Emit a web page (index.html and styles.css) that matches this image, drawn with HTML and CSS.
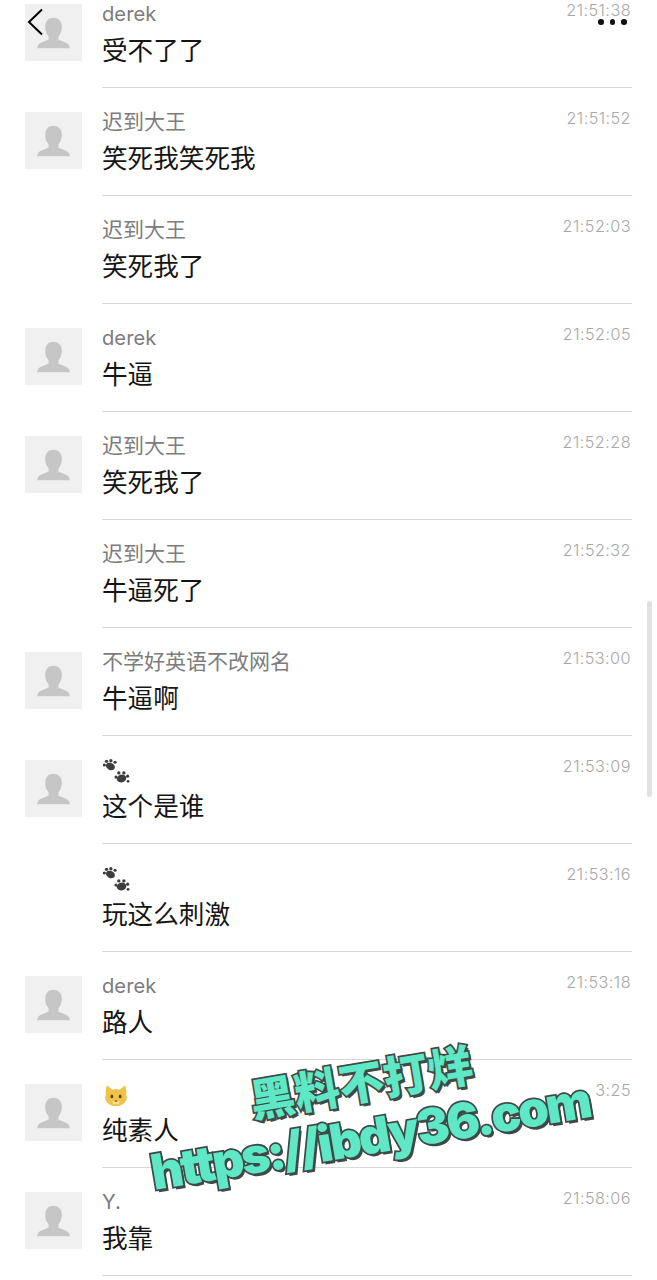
FILE: index.html
```html
<!DOCTYPE html>
<html lang="zh">
<head>
<meta charset="utf-8">
<title>聊天记录</title>
<link rel="stylesheet" href="styles.css">
</head>
<body>
<svg class="defs" width="0" height="0" aria-hidden="true">
  <defs>
    <symbol id="person" viewBox="0 0 58 58">
      <rect width="58" height="58" fill="#f0f0f0"/>
      <path d="M29 14c-5.500 0-8.500 4-8.500 9.500 0 4 1.500 7.500 3.500 9.500v3c-3 2-9 2.700-10.500 5.500-.8 1.300-1 2.300-1 3.500h33c0-1.200-.2-2.200-1-3.500-1.500-2.800-7.500-3.500-10.500-5.500v-3c2-2 3.500-5.500 3.500-9.500 0-5.500-3-9.500-8.500-9.500z" fill="#c6c6c6"/>
    </symbol>
    <symbol id="paws" viewBox="0 0 30 28">
      <g fill="#3d3d3d">
        <ellipse cx="9" cy="8" rx="5" ry="3.800" transform="rotate(25 9 8)"/>
        <circle cx="2.500" cy="6.500" r="1.700"/><circle cx="4.800" cy="2.500" r="1.800"/><circle cx="9.500" cy="1.900" r="1.800"/><circle cx="14" cy="3.500" r="1.700"/>
        <ellipse cx="21" cy="21" rx="5.200" ry="4.200" transform="rotate(-15 21 21)"/>
        <circle cx="15" cy="19.500" r="1.700"/><circle cx="18" cy="15" r="1.800"/><circle cx="23.500" cy="15" r="1.800"/><circle cx="27.500" cy="18.500" r="1.700"/><circle cx="28" cy="24" r="1.500"/>
      </g>
    </symbol>
    <symbol id="cat" viewBox="0 0 26 24">
      <path d="M3 1l6 4.500c2.500-.8 5.500-.8 8 0L23 1c1 3 1.500 7 1 10 1 3 1 5.500-1 8-2.500 3.500-6 4.500-10 4.500S5.500 22.500 3 19c-2-2.500-2-5-1-8-.5-3 0-7 1-10z" fill="#efc44a"/>
      <path d="M8 17c1.500 3 8.500 3 10 0l-2 4h-6z" fill="#fbe6a0"/>
      <ellipse cx="8.500" cy="13" rx="1.500" ry="2" fill="#5f4210"/>
      <ellipse cx="17.500" cy="13" rx="1.500" ry="2" fill="#5f4210"/>
      <path d="M11.500 17.500h3l-1.500 1.500z" fill="#5f4210"/>
    </symbol>
  </defs>
</svg>

<main class="list">
  <article class="row">
    <svg class="avatar"><use href="#person"/></svg>
    <div class="body"><div class="head"><span class="name latin">derek</span><time class="time">21:51:38</time></div><p class="msg">受不了了</p></div>
  </article>
  <article class="row">
    <svg class="avatar"><use href="#person"/></svg>
    <div class="body"><div class="head"><span class="name">迟到大王</span><time class="time">21:51:52</time></div><p class="msg">笑死我笑死我</p></div>
  </article>
  <article class="row">
    <div class="avatar"></div>
    <div class="body"><div class="head"><span class="name">迟到大王</span><time class="time">21:52:03</time></div><p class="msg">笑死我了</p></div>
  </article>
  <article class="row">
    <svg class="avatar"><use href="#person"/></svg>
    <div class="body"><div class="head"><span class="name latin">derek</span><time class="time">21:52:05</time></div><p class="msg">牛逼</p></div>
  </article>
  <article class="row">
    <svg class="avatar"><use href="#person"/></svg>
    <div class="body"><div class="head"><span class="name">迟到大王</span><time class="time">21:52:28</time></div><p class="msg">笑死我了</p></div>
  </article>
  <article class="row">
    <div class="avatar"></div>
    <div class="body"><div class="head"><span class="name">迟到大王</span><time class="time">21:52:32</time></div><p class="msg">牛逼死了</p></div>
  </article>
  <article class="row">
    <svg class="avatar"><use href="#person"/></svg>
    <div class="body"><div class="head"><span class="name">不学好英语不改网名</span><time class="time">21:53:00</time></div><p class="msg">牛逼啊</p></div>
  </article>
  <article class="row">
    <svg class="avatar"><use href="#person"/></svg>
    <div class="body"><div class="head"><span class="name"><svg class="emoji-paws"><use href="#paws"/></svg></span><time class="time">21:53:09</time></div><p class="msg">这个是谁</p></div>
  </article>
  <article class="row">
    <div class="avatar"></div>
    <div class="body"><div class="head"><span class="name"><svg class="emoji-paws"><use href="#paws"/></svg></span><time class="time">21:53:16</time></div><p class="msg">玩这么刺激</p></div>
  </article>
  <article class="row">
    <svg class="avatar"><use href="#person"/></svg>
    <div class="body"><div class="head"><span class="name latin">derek</span><time class="time">21:53:18</time></div><p class="msg">路人</p></div>
  </article>
  <article class="row">
    <svg class="avatar"><use href="#person"/></svg>
    <div class="body"><div class="head"><span class="name"><svg class="emoji-cat"><use href="#cat"/></svg></span><time class="time">21:53:25</time></div><p class="msg">纯素人</p></div>
  </article>
  <article class="row">
    <svg class="avatar"><use href="#person"/></svg>
    <div class="body"><div class="head"><span class="name latin">Y.</span><time class="time">21:58:06</time></div><p class="msg">我靠</p></div>
  </article>
</main>

<svg class="back" viewBox="0 0 16 28" aria-label="返回"><path d="M15 1.500 2 14l13 12.500" fill="none" stroke="#000" stroke-width="2"/></svg>
<div class="more" aria-label="更多"><i></i><i></i><i></i></div>
<div class="scrollbar"></div>

<div class="smudge"></div>
<div class="watermark">
  <div class="wm-top">黑料不打烊</div>
  <div class="wm-url">https://ibdy36.com</div>
</div>
</body>
</html>
```
FILE: styles.css
```css
* { box-sizing: border-box; }

html, body {
  margin: 0;
  padding: 0;
  height: 1280px;
  overflow: hidden;
  background: #fff;
}

body {
  position: relative;
  font-family: Inter, "Noto Sans CJK SC", sans-serif;
}

.defs { position: absolute; }

.list {
  margin-top: -20px;
  padding: 0 25px;
}

.row {
  display: flex;
  gap: 20px;
  height: 108px;
  padding-top: 24px;
}

.avatar {
  flex: none;
  width: 57px;
  height: 57px;
  display: block;
}

.body {
  flex: 1;
  height: 108px;
  border-bottom: 1px solid #d8d8d8;
  margin-top: -24px;
  padding-top: 20px;
}

.head {
  display: flex;
  justify-content: space-between;
  height: 28px;
}

.name {
  font-size: 21px;
  line-height: 28px;
  color: #7c7c7c;
}

.name.latin {
  font-size: 20.2px;
}

.time {
  font-family: Inter, sans-serif;
  font-size: 16.2px;
  font-weight: 300;
  line-height: 20px;
  letter-spacing: 0.45px;
  color: #a8a8a8;
  margin-right: 1px;
}

.msg {
  margin: 4px 0 0;
  font-family: "Noto Sans CJK SC", sans-serif;
  font-size: 25.6px;
  line-height: 34px;
  color: #151515;
}

.emoji-paws {
  display: block;
  width: 28px;
  height: 26px;
  margin-top: 3px;
}

.emoji-cat {
  display: block;
  width: 24px;
  height: 23px;
  margin: 4px 0 0 2px;
}

.back {
  position: absolute;
  left: 27px;
  top: 8px;
  width: 16px;
  height: 28px;
}

.more {
  position: absolute;
  left: 598px;
  top: 19px;
  display: flex;
  gap: 6px;
}

.more i {
  display: block;
  width: 5.500px;
  height: 5.500px;
  border-radius: 50%;
  background: #111;
}

.scrollbar {
  position: absolute;
  left: 647px;
  top: 601px;
  width: 5px;
  height: 196px;
  border-radius: 3px;
  background: #e2e2e2;
}

.smudge {
  position: absolute;
  left: 545px;
  top: 1076px;
  width: 51px;
  height: 30px;
  background: #fff;
}

.watermark {
  position: absolute;
  left: 92px;
  top: 1037px;
  width: 550px;
  height: 160px;
  transform: rotate(-9.500deg);
  color: #5ee8c5;
  font-weight: 900;
  text-align: center;
}

.wm-top,
.wm-url {
  -webkit-text-stroke: 3.500px #3f4a48;
  paint-order: stroke fill;
  text-shadow: 2px 3px 0 #3f4a48;
  white-space: nowrap;
}

.wm-top {
  font-family: "Noto Sans CJK SC", sans-serif;
  font-size: 45px;
  line-height: 56px;
  margin: 15px 0 0 0;
}

.wm-url {
  font-family: Inter, "Liberation Sans", sans-serif;
  font-size: 49px;
  line-height: 58px;
  letter-spacing: -2.400px;
}
```
